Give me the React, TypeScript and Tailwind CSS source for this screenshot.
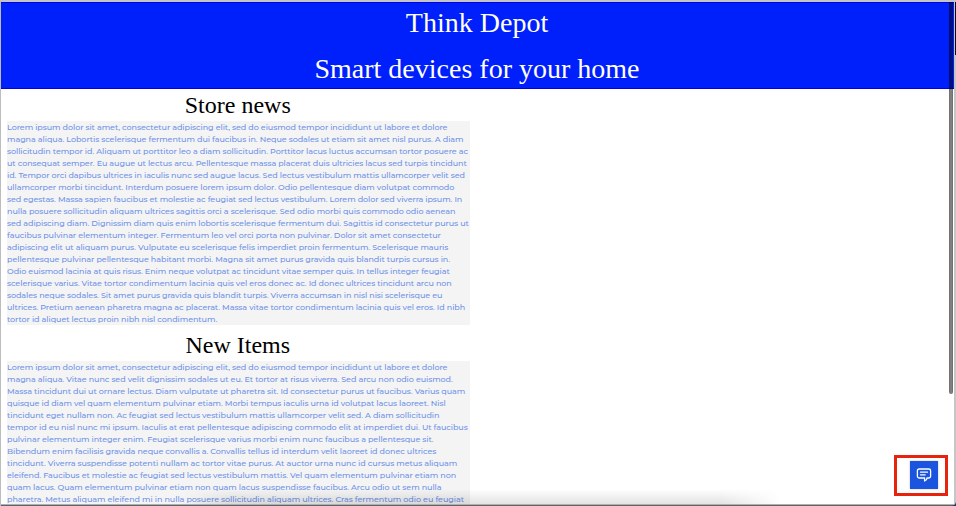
import { useLayoutEffect, useRef } from "react";

type Line = [text: string, width: number];

const storeNews: Line[] = [
  ["Lorem ipsum dolor sit amet, consectetur adipiscing elit, sed do eiusmod tempor incididunt ut labore et dolore", 440],
  ["magna aliqua. Lobortis scelerisque fermentum dui faucibus in. Neque sodales ut etiam sit amet nisl purus. A diam", 456],
  ["sollicitudin tempor id. Aliquam ut porttitor leo a diam sollicitudin. Porttitor lacus luctus accumsan tortor posuere ac", 461],
  ["ut consequat semper. Eu augue ut lectus arcu. Pellentesque massa placerat duis ultricies lacus sed turpis tincidunt", 459.5],
  ["id. Tempor orci dapibus ultrices in iaculis nunc sed augue lacus. Sed lectus vestibulum mattis ullamcorper velit sed", 458],
  ["ullamcorper morbi tincidunt. Interdum posuere lorem ipsum dolor. Odio pellentesque diam volutpat commodo", 447],
  ["sed egestas. Massa sapien faucibus et molestie ac feugiat sed lectus vestibulum. Lorem dolor sed viverra ipsum. In", 455.5],
  ["nulla posuere sollicitudin aliquam ultrices sagittis orci a scelerisque. Sed odio morbi quis commodo odio aenean", 448],
  ["sed adipiscing diam. Dignissim diam quis enim lobortis scelerisque fermentum dui. Sagittis id consectetur purus ut", 461.5],
  ["faucibus pulvinar elementum integer. Fermentum leo vel orci porta non pulvinar. Dolor sit amet consectetur", 434],
  ["adipiscing elit ut aliquam purus. Vulputate eu scelerisque felis imperdiet proin fermentum. Scelerisque mauris", 441],
  ["pellentesque pulvinar pellentesque habitant morbi. Magna sit amet purus gravida quis blandit turpis cursus in.", 443],
  ["Odio euismod lacinia at quis risus. Enim neque volutpat ac tincidunt vitae semper quis. In tellus integer feugiat", 443],
  ["scelerisque varius. Vitae tortor condimentum lacinia quis vel eros donec ac. Id donec ultrices tincidunt arcu non", 445],
  ["sodales neque sodales. Sit amet purus gravida quis blandit turpis. Viverra accumsan in nisl nisi scelerisque eu", 435.5],
  ["ultrices. Pretium aenean pharetra magna ac placerat. Massa vitae tortor condimentum lacinia quis vel eros. Id nibh", 458],
  ["tortor id aliquet lectus proin nibh nisl condimentum.", 210],
];

const newItems: Line[] = [
  ["Lorem ipsum dolor sit amet, consectetur adipiscing elit, sed do eiusmod tempor incididunt ut labore et dolore", 440],
  ["magna aliqua. Vitae nunc sed velit dignissim sodales ut eu. Et tortor at risus viverra. Sed arcu non odio euismod.", 445.5],
  ["Massa tincidunt dui ut ornare lectus. Diam vulputate ut pharetra sit. Id consectetur purus ut faucibus. Varius quam", 458],
  ["quisque id diam vel quam elementum pulvinar etiam. Morbi tempus iaculis urna id volutpat lacus laoreet. Nisl", 439],
  ["tincidunt eget nullam non. Ac feugiat sed lectus vestibulum mattis ullamcorper velit sed. A diam sollicitudin", 432],
  ["tempor id eu nisl nunc mi ipsum. Iaculis at erat pellentesque adipiscing commodo elit at imperdiet dui. Ut faucibus", 461],
  ["pulvinar elementum integer enim. Feugiat scelerisque varius morbi enim nunc faucibus a pellentesque sit.", 427],
  ["Bibendum enim facilisis gravida neque convallis a. Convallis tellus id interdum velit laoreet id donec ultrices", 429],
  ["tincidunt. Viverra suspendisse potenti nullam ac tortor vitae purus. At auctor urna nunc id cursus metus aliquam", 450],
  ["eleifend. Faucibus et molestie ac feugiat sed lectus vestibulum mattis. Vel quam elementum pulvinar etiam non", 449],
  ["quam lacus. Quam elementum pulvinar etiam non quam lacus suspendisse faucibus. Arcu odio ut sem nulla", 434.5],
  ["pharetra. Metus aliquam eleifend mi in nulla posuere sollicitudin aliquam ultrices. Cras fermentum odio eu feugiat", 456.5],
];

// Spreads a line over its measure with even tracking.
function FittedLine({ text, width }: { text: string; width: number }) {
  const ref = useRef<HTMLSpanElement>(null);
  useLayoutEffect(() => {
    const el = ref.current;
    if (!el) return;
    const fit = () => {
      el.style.letterSpacing = "0px";
      const natural = el.offsetWidth;
      el.style.letterSpacing = `${(width - natural) / text.length}px`;
    };
    fit();
    document.fonts.ready.then(fit);
  }, [text, width]);
  return (
    <div className="h-3 whitespace-nowrap">
      <span ref={ref}>{text}</span>
    </div>
  );
}

function Section({ title, lines }: { title: string; lines: Line[] }) {
  return (
    <section className="w-[462.5px] shrink-0">
      <h2 className="h-8 pr-px text-center font-['Liberation_Serif',serif] text-2xl leading-8 text-black">{title}</h2>
      <div className="bg-[#f4f4f4] font-[Montserrat,Inter,sans-serif] text-[8px] font-medium leading-3 text-[#6f92e8]">
        {/* The tiny rotation turns off glyph hinting, which would flatten type this small. */}
        <div className="rotate-[0.01deg]">
          {lines.map(([text, width]) => (
            <FittedLine key={text} text={text} width={width} />
          ))}
        </div>
      </div>
    </section>
  );
}

export default function App() {
  return (
    <div className="relative flex h-[506px] w-[956px] flex-col overflow-hidden border-l border-t-2 border-l-[#bdbdbd] border-t-[#c4c4c8] bg-white">
      <header className="mr-[2px] h-[87px] shrink-0 border-y border-[#0000e0] bg-[#0020fb] pr-px text-center font-['Liberation_Serif',serif] text-[28px] text-white">
        <h1 className="h-[46px] leading-[39px]">Think Depot</h1>
        <p className="leading-[39px]">Smart devices for your home</p>
      </header>
      <main className="flex flex-col gap-1 pl-[6px]">
        <Section title="Store news" lines={storeNews} />
        <Section title="New Items" lines={newItems} />
      </main>

      {/* Window shadow along the bottom edge */}
      <div className="absolute bottom-[2px] left-[180px] h-[15px] w-[600px] bg-linear-to-b from-transparent to-black/11 mask-[linear-gradient(to_right,transparent,black_50px,black_90%,transparent)]" />
      <div className="absolute inset-x-0 bottom-0 h-[2px] border-t border-[#b0b0b0] bg-[#606466]" />

      {/* Scrollbar and window edge */}
      <div className="absolute right-[3px] top-0 h-[392px] w-[4px] rounded-b-sm border-x border-black/10 bg-black/50" />
      <div className="absolute right-0 top-0 h-full w-[2px] bg-[#c6c6c6]" />
      <div className="absolute right-0 top-0 h-[53px] w-px bg-[#08083c]" />
      <svg className="absolute bottom-0 right-0" width="5" height="4" viewBox="0 0 5 4">
        <path d="M5 0V4H0Q4 4 5 0Z" fill="#123f75" />
      </svg>

      {/* Chat launcher with callout frame */}
      <div className="absolute left-[893px] top-[453px] h-[41px] w-[54px] border-[3px] border-[#e8230d]">
        <div className="ml-[13px] mt-[3px] flex h-7 w-7 items-center justify-center bg-[#1b55df] shadow-[0_0_2px_rgba(0,0,0,0.25)]">
          <svg width="16" height="16" viewBox="0 0 16 16" fill="none" stroke="white" strokeWidth="1.3" strokeLinejoin="round" strokeLinecap="round">
            <path d="M3.2 2H12.8Q14.6 2 14.6 3.8V9.2Q14.6 11 12.8 11H11Q11 13.2 8.6 14V11H3.2Q1.4 11 1.4 9.2V3.8Q1.4 2 3.2 2Z" />
            <path d="M4.5 5.2H11.5M4.5 7.8H9.2" />
          </svg>
        </div>
      </div>
    </div>
  );
}
